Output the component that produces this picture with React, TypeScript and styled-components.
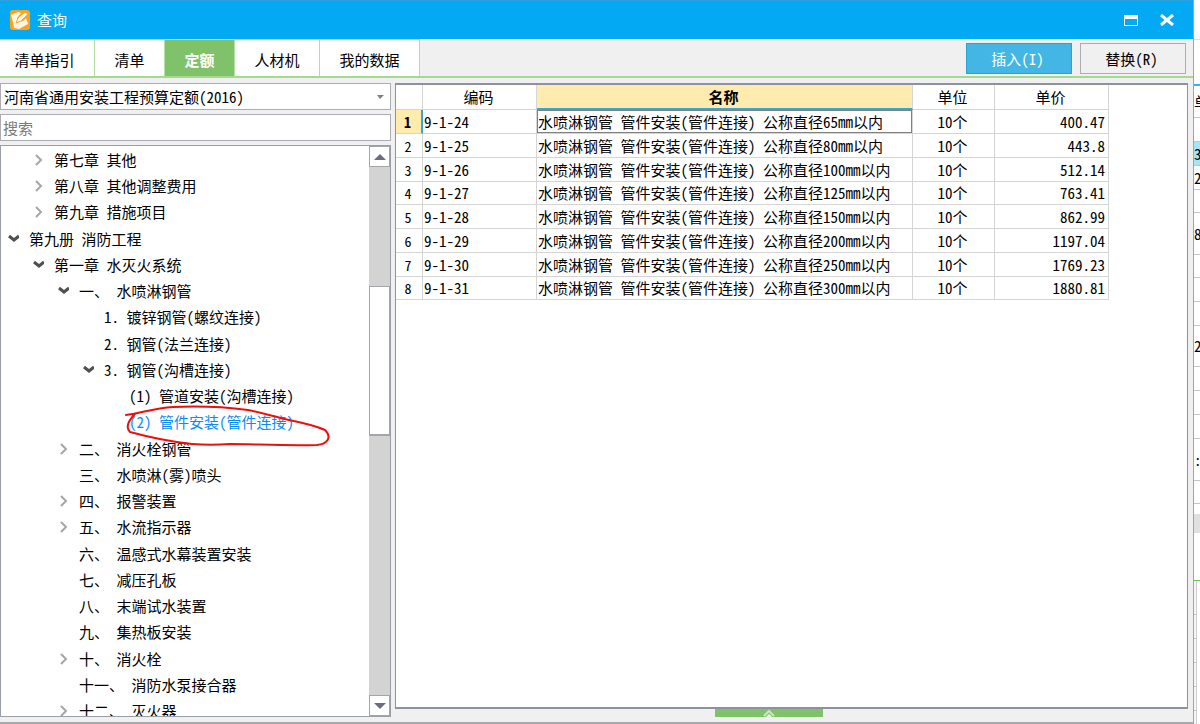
import React from "react";
import styled, { createGlobalStyle, css } from "styled-components";

const GlobalStyle = createGlobalStyle`
  *, *::before, *::after { box-sizing: border-box; }
  body {
    margin: 0;
    background: #fff;
    color: #000;
    font-family: "Noto Sans CJK SC", sans-serif;
    font-size: 15px;
    line-height: 20px;
    font-feature-settings: "hwid" 1;
  }
  button, input, select {
    font: inherit;
    color: inherit;
    font-feature-settings: inherit;
    border-radius: 0;
    margin: 0;
    padding: 0;
  }
`;

const Screen = styled.div`
  display: flex;
  height: 100vh;
  overflow: hidden;
`;

const Dialog = styled.main`
  flex: 1;
  min-width: 0;
  display: flex;
  flex-direction: column;
  background: #f0f0f0;
  border-top: 1px solid #2a9fdb;
  border-right: 1px solid #a3a3a5;
  border-bottom: 2px solid #a9a9ab;
`;

const TitleBar = styled.header`
  flex: none;
  height: 38px;
  display: flex;
  align-items: center;
  gap: 7px;
  padding: 0 17px 0 10px;
  background: #03a9f3;
  color: #fff;
`;

const Title = styled.h1`
  flex: 1;
  margin: 0;
  font-size: 15px;
  font-weight: 400;
`;

const WindowButton = styled.button`
  display: flex;
  align-items: center;
  justify-content: center;
  width: 18px;
  height: 18px;
  margin-left: 11px;
  border: 0;
  background: none;
`;

const TabBar = styled.nav`
  flex: none;
  display: flex;
  align-items: stretch;
  height: 39px;
  border-bottom: 2px solid #a6d795;
`;

const Tab = styled.button<{ $w: number; $active?: boolean }>`
  width: ${(p) => p.$w}px;
  border: 0;
  border-top: 1px solid #b4e0a3;
  border-right: 1px solid #b4e0a3;
  background: ${(p) => (p.$active ? "#80c269" : "#fff")};
  color: ${(p) => (p.$active ? "#fff" : "#000")};
  font-weight: ${(p) => (p.$active ? 700 : 400)};
  padding-top: 3px;

  &:first-child { padding-right: 5px; }
`;

const Actions = styled.div`
  margin-left: auto;
  display: flex;
  gap: 8px;
  padding: 4px 7px 2px 0;
`;

const ActionButton = styled.button<{ $primary?: boolean }>`
  width: 106px;
  height: 31px;
  padding-right: 3px;
  border: 1px solid ${(p) => (p.$primary ? "#2f9fcf" : "#adadad")};
  background: ${(p) => (p.$primary ? "#44b6e5" : "#f0f0f0")};
  color: ${(p) => (p.$primary ? "#fff" : "#000")};
`;

const Body = styled.div`
  flex: 1;
  min-height: 0;
  display: flex;
  gap: 4px;
  padding: 5px 5px 5px 0;
`;

const Side = styled.aside`
  flex: none;
  width: 391px;
  display: flex;
  flex-direction: column;
  gap: 4px;
`;

const fieldBox = css`
  flex: none;
  width: 100%;
  height: 27px;
  border: 1px solid #abadb3;
  background: #fff;
`;

const SelectBox = styled.div`
  ${fieldBox}
  display: flex;
  align-items: center;
  padding-right: 6px;
`;

const Select = styled.select`
  flex: 1;
  height: 25px;
  border: 0;
  padding-left: 3px;
  appearance: none;
  background: none;
`;

const SearchInput = styled.input`
  ${fieldBox}
  padding-left: 2px;
  &::placeholder { color: #7b7b7b; opacity: 1; }
`;

const TreeBox = styled.div`
  flex: 1;
  min-height: 0;
  display: flex;
  border: 1px solid #9a9ea6;
  background: #fff;
  overflow: hidden;
`;

const Tree = styled.ul`
  flex: 1;
  margin: 0;
  padding: 1px 0 0;
  list-style: none;
  overflow: hidden;
`;

const TreeRow = styled.li<{ $level: number; $selected?: boolean }>`
  display: flex;
  align-items: center;
  height: 26px;
  padding-left: ${(p) => 4 + p.$level * 25}px;
  white-space: pre;
  color: ${(p) => (p.$selected ? "#0b8cf5" : "#000")};
  &:nth-child(4n) { height: 27px; }
`;

const Toggle = styled.span`
  flex: none;
  display: flex;
  width: 24px;
`;

const MarkedLabel = styled.span`
  position: relative;
`;

const HandMark = styled.svg`
  position: absolute;
  left: -5px;
  top: -7px;
  overflow: visible;
  pointer-events: none;
`;

const ScrollBar = styled.div`
  flex: none;
  width: 21px;
  display: flex;
  flex-direction: column;
  background: #d3d3d3;
`;

const ScrollButton = styled.button`
  flex: none;
  height: 21px;
  display: flex;
  align-items: center;
  justify-content: center;
  border: 1px solid #a3a5aa;
  background: #fff;
`;

const ScrollSpace = styled.div<{ $grow: number }>`
  flex: ${(p) => p.$grow};
`;

const Thumb = styled.div`
  flex: 148;
  border: 1px solid #a3a5aa;
  border-bottom-width: 2px;
  background: #fff;
`;

const Content = styled.section`
  flex: 1;
  min-width: 0;
  display: flex;
  flex-direction: column;
`;

const GridBox = styled.div`
  flex: 1;
  min-height: 0;
  overflow: hidden;
  border: 1px solid #8c939e;
  border-top-width: 2px;
  border-bottom-width: 2px;
  background: #fff;
`;

const Grid = styled.table`
  table-layout: fixed;
  width: 713px;
  border-collapse: separate;
  border-spacing: 0;
  line-height: 20px;

  th, td {
    border: 0 solid #d5d5d5;
    border-width: 0 1px 1px 0;
    padding: 0 3px 0 1px;
    overflow: hidden;
    white-space: pre;
    font-weight: 400;
  }
`;

const HeadCell = styled.th<{ $active?: boolean }>`
  height: 25px;
  text-align: center;
  && {
    ${(p) => p.$active && css`
      background: #ffebae;
      font-weight: 700;
      border-bottom: 2px solid #37a5d3;
    `}
  }
`;

const Row = styled.tr`
  height: 24px;
  &:nth-child(4n) { height: 23px; }
`;

const NumberCell = styled.th<{ $active?: boolean }>`
  && {
    font-size: 14px;
    ${(p) => p.$active && css`
      background: #ffebae;
      font-weight: 700;
      border-right: 2px solid #37a5d3;
    `}
  }
`;

const Cell = styled.td<{ $align?: string; $focus?: boolean }>`
  text-align: ${(p) => p.$align ?? "left"};
  ${(p) => p.$focus && css`
    box-shadow: inset 1px 1px #808080, inset -1px -1px #808080;
  `}
`;

const Splitter = styled.div`
  flex: none;
  display: flex;
  height: 8px;
`;

const SplitterSpace = styled.div<{ $grow: number }>`
  flex: ${(p) => p.$grow};
`;

const SplitterButton = styled.button`
  display: flex;
  justify-content: center;
  width: 108px;
  border: 0;
  background: #80c269;
`;

const Behind = styled.aside`
  flex: none;
  width: 6px;
  background: #fff;
  overflow: hidden;
`;

const BehindCell = styled.div<{ $h: number; $line?: string; $bg?: string }>`
  display: flex;
  align-items: center;
  height: ${(p) => p.$h}px;
  border-bottom: 1px solid ${(p) => p.$line ?? "#c4c4c4"};
  background: ${(p) => p.$bg ?? "#fff"};
  overflow: hidden;
  white-space: nowrap;
`;

const BehindPanelRow = styled.div<{ $h: number }>`
  width: 3px;
  height: ${(p) => p.$h}px;
  border-right: 1px solid #cfcfcf;
  border-bottom: 1px solid #c9c5c0;
  background: #f6f6f6;
`;

type Node = { level: number; text: string; state?: "open" | "closed"; selected?: boolean };

const nodes: Node[] = [
  { level: 1, text: "第七章 其他", state: "closed" },
  { level: 1, text: "第八章 其他调整费用", state: "closed" },
  { level: 1, text: "第九章 措施项目", state: "closed" },
  { level: 0, text: "第九册 消防工程", state: "open" },
  { level: 1, text: "第一章 水灭火系统", state: "open" },
  { level: 2, text: "一、 水喷淋钢管", state: "open" },
  { level: 3, text: "1. 镀锌钢管(螺纹连接)" },
  { level: 3, text: "2. 钢管(法兰连接)" },
  { level: 3, text: "3. 钢管(沟槽连接)", state: "open" },
  { level: 4, text: "(1) 管道安装(沟槽连接)" },
  { level: 4, text: "(2) 管件安装(管件连接)", selected: true },
  { level: 2, text: "二、 消火栓钢管", state: "closed" },
  { level: 2, text: "三、 水喷淋(雾)喷头" },
  { level: 2, text: "四、 报警装置", state: "closed" },
  { level: 2, text: "五、 水流指示器", state: "closed" },
  { level: 2, text: "六、 温感式水幕装置安装" },
  { level: 2, text: "七、 减压孔板" },
  { level: 2, text: "八、 末端试水装置" },
  { level: 2, text: "九、 集热板安装" },
  { level: 2, text: "十、 消火栓", state: "closed" },
  { level: 2, text: "十一、 消防水泵接合器" },
  { level: 2, text: "十二、 灭火器", state: "closed" },
];

const items = [
  ["9-1-24", 65, "400.47"],
  ["9-1-25", 80, "443.8"],
  ["9-1-26", 100, "512.14"],
  ["9-1-27", 125, "763.41"],
  ["9-1-28", 150, "862.99"],
  ["9-1-29", 200, "1197.04"],
  ["9-1-30", 250, "1769.23"],
  ["9-1-31", 300, "1880.81"],
] as const;

const tabs = [
  { label: "清单指引", w: 95 },
  { label: "清单", w: 70 },
  { label: "定额", w: 70, active: true },
  { label: "人材机", w: 85 },
  { label: "我的数据", w: 100 },
];

const behind: { h: number; line?: string; bg?: string; text?: string }[] = [
  { h: 40, line: "#dcdcdc" },
  { h: 44, line: "#fff" },
  { h: 2, line: "#37b5e8", bg: "#37b5e8" },
  { h: 32, text: "单" },
  { h: 24 },
  { h: 24, bg: "#a8e4f8", text: "38" },
  { h: 24, text: "2" },
  { h: 23 },
  { h: 42, text: "82" },
  { h: 23 },
  { h: 24 },
  { h: 24 },
  { h: 41, text: "28" },
  { h: 24 },
  { h: 24 },
  { h: 24 },
  { h: 42, text: ":" },
  { h: 23 },
  { h: 10, line: "#fff" },
  { h: 19, line: "#e0e0e0", bg: "#e0e0e0" },
  { h: 48, line: "#6cc94f" },
];

const behindPanel = [34, 24, 24, 24, 24, 24];

const AppLogo = () => (
  <svg width="20" height="20" viewBox="0 0 20 20" aria-hidden="true">
    <rect width="20" height="20" rx="3" fill="#f8a51b" />
    <path d="M1 5l7-3 3 1-4 5 1 4 5-1 3-3 2 6-9 5-5-1-1-6z" fill="#fff5e2" />
    <path d="M6 13l2-5 7-6 3 2-7 7z" fill="#fff" stroke="#f8a51b" strokeWidth="1" />
  </svg>
);

const ToggleIcon = ({ open }: { open: boolean }) =>
  open ? (
    <svg width="14" height="12" viewBox="0 0 14 12" aria-hidden="true">
      <path d="M4 3l5 4 5-4" fill="none" stroke="#505050" strokeWidth="3" />
    </svg>
  ) : (
    <svg width="14" height="12" viewBox="0 0 14 12" aria-hidden="true">
      <path d="M6 1l5 5-5 5" fill="none" stroke="#a6a6a6" strokeWidth="2" />
    </svg>
  );

export default function App() {
  return (
    <>
      <GlobalStyle />
      <Screen>
        <Dialog>
          <TitleBar>
            <AppLogo />
            <Title>查询</Title>
            <WindowButton aria-label="最大化">
              <svg width="14" height="11" viewBox="0 0 14 11">
                <path d="M0 0h14v11H0zM1 4v6h12V4z" fill="#fff" fillRule="evenodd" />
              </svg>
            </WindowButton>
            <WindowButton aria-label="关闭">
              <svg width="14" height="12" viewBox="0 0 14 12">
                <path d="M1 1l12 10M13 1L1 11" stroke="#fff" strokeWidth="3" />
              </svg>
            </WindowButton>
          </TitleBar>

          <TabBar>
            {tabs.map((t) => (
              <Tab key={t.label} $w={t.w} $active={t.active}>{t.label}</Tab>
            ))}
            <Actions>
              <ActionButton $primary>插入(I)</ActionButton>
              <ActionButton>替换(R)</ActionButton>
            </Actions>
          </TabBar>

          <Body>
            <Side>
              <SelectBox>
                <Select aria-label="定额库">
                  <option>河南省通用安装工程预算定额(2016)</option>
                </Select>
                <svg width="8" height="5" viewBox="0 0 8 5" aria-hidden="true">
                  <path d="M1 1h7L4 5z" fill="#7d8087" />
                </svg>
              </SelectBox>
              <SearchInput type="text" placeholder="搜索" aria-label="搜索" />
              <TreeBox>
                <Tree>
                  {nodes.map((n) => (
                    <TreeRow key={n.text} $level={n.level} $selected={n.selected}>
                      <Toggle>{n.state && <ToggleIcon open={n.state === "open"} />}</Toggle>
                      {n.selected ? (
                        <MarkedLabel>
                          {n.text}
                          <HandMark width="206" height="42" viewBox="0 0 206 42" aria-hidden="true">
                            <path
                              d="M2 10C14 9 30 3 49 2C74 1 101 2 124 5C143 9 151 12 165 15C180 18 192 21 201 25C208 32 204 39 193 40C160 41 130 39 106 39C93 40 80 40 68 39C49 37 28 33 6 27C1 22 5 15 11 9"
                              fill="none"
                              stroke="#f20d0d"
                              strokeWidth="2"
                              strokeLinecap="round"
                            />
                          </HandMark>
                        </MarkedLabel>
                      ) : (
                        <span>{n.text}</span>
                      )}
                    </TreeRow>
                  ))}
                </Tree>
                <ScrollBar>
                  <ScrollButton aria-label="向上滚动">
                    <svg width="12" height="6" viewBox="0 0 12 6"><path d="M0 6h12L6 0z" fill="#6a6e7c" /></svg>
                  </ScrollButton>
                  <ScrollSpace $grow={120} />
                  <Thumb />
                  <ScrollSpace $grow={261} />
                  <ScrollButton aria-label="向下滚动">
                    <svg width="12" height="6" viewBox="0 0 12 6"><path d="M0 0h12L6 6z" fill="#6a6e7c" /></svg>
                  </ScrollButton>
                </ScrollBar>
              </TreeBox>
            </Side>

            <Content>
              <GridBox>
                <Grid>
                  <colgroup>
                    <col width={27} />
                    <col width={114} />
                    <col width={376} />
                    <col width={82} />
                    <col width={114} />
                  </colgroup>
                  <thead>
                    <tr>
                      <HeadCell aria-label="序号" />
                      <HeadCell>编码</HeadCell>
                      <HeadCell $active>名称</HeadCell>
                      <HeadCell>单位</HeadCell>
                      <HeadCell>单价</HeadCell>
                    </tr>
                  </thead>
                  <tbody>
                    {items.map(([code, size, price], i) => (
                      <Row key={code}>
                        <NumberCell scope="row" $active={i === 0}>{i + 1}</NumberCell>
                        <Cell>{code}</Cell>
                        <Cell $focus={i === 0}>{`水喷淋钢管 管件安装(管件连接) 公称直径${size}mm以内`}</Cell>
                        <Cell $align="center">10个</Cell>
                        <Cell $align="right">{price}</Cell>
                      </Row>
                    ))}
                  </tbody>
                </Grid>
              </GridBox>
              <Splitter>
                <SplitterSpace $grow={320} />
                <SplitterButton aria-label="展开">
                  <svg width="12" height="8" viewBox="0 0 12 8">
                    <path d="M1 7l5-5 5 5" fill="none" stroke="#c9e8be" strokeWidth="2" />
                    <path d="M3 8l3-3 3 3z" fill="#fff" />
                  </svg>
                </SplitterButton>
                <SplitterSpace $grow={365} />
              </Splitter>
            </Content>
          </Body>
        </Dialog>

        <Behind>
          {behind.map((b, i) => (
            <BehindCell key={i} $h={b.h} $line={b.line} $bg={b.bg}>{b.text}</BehindCell>
          ))}
          {behindPanel.map((h, i) => (
            <BehindPanelRow key={i} $h={h} />
          ))}
        </Behind>
      </Screen>
    </>
  );
}
